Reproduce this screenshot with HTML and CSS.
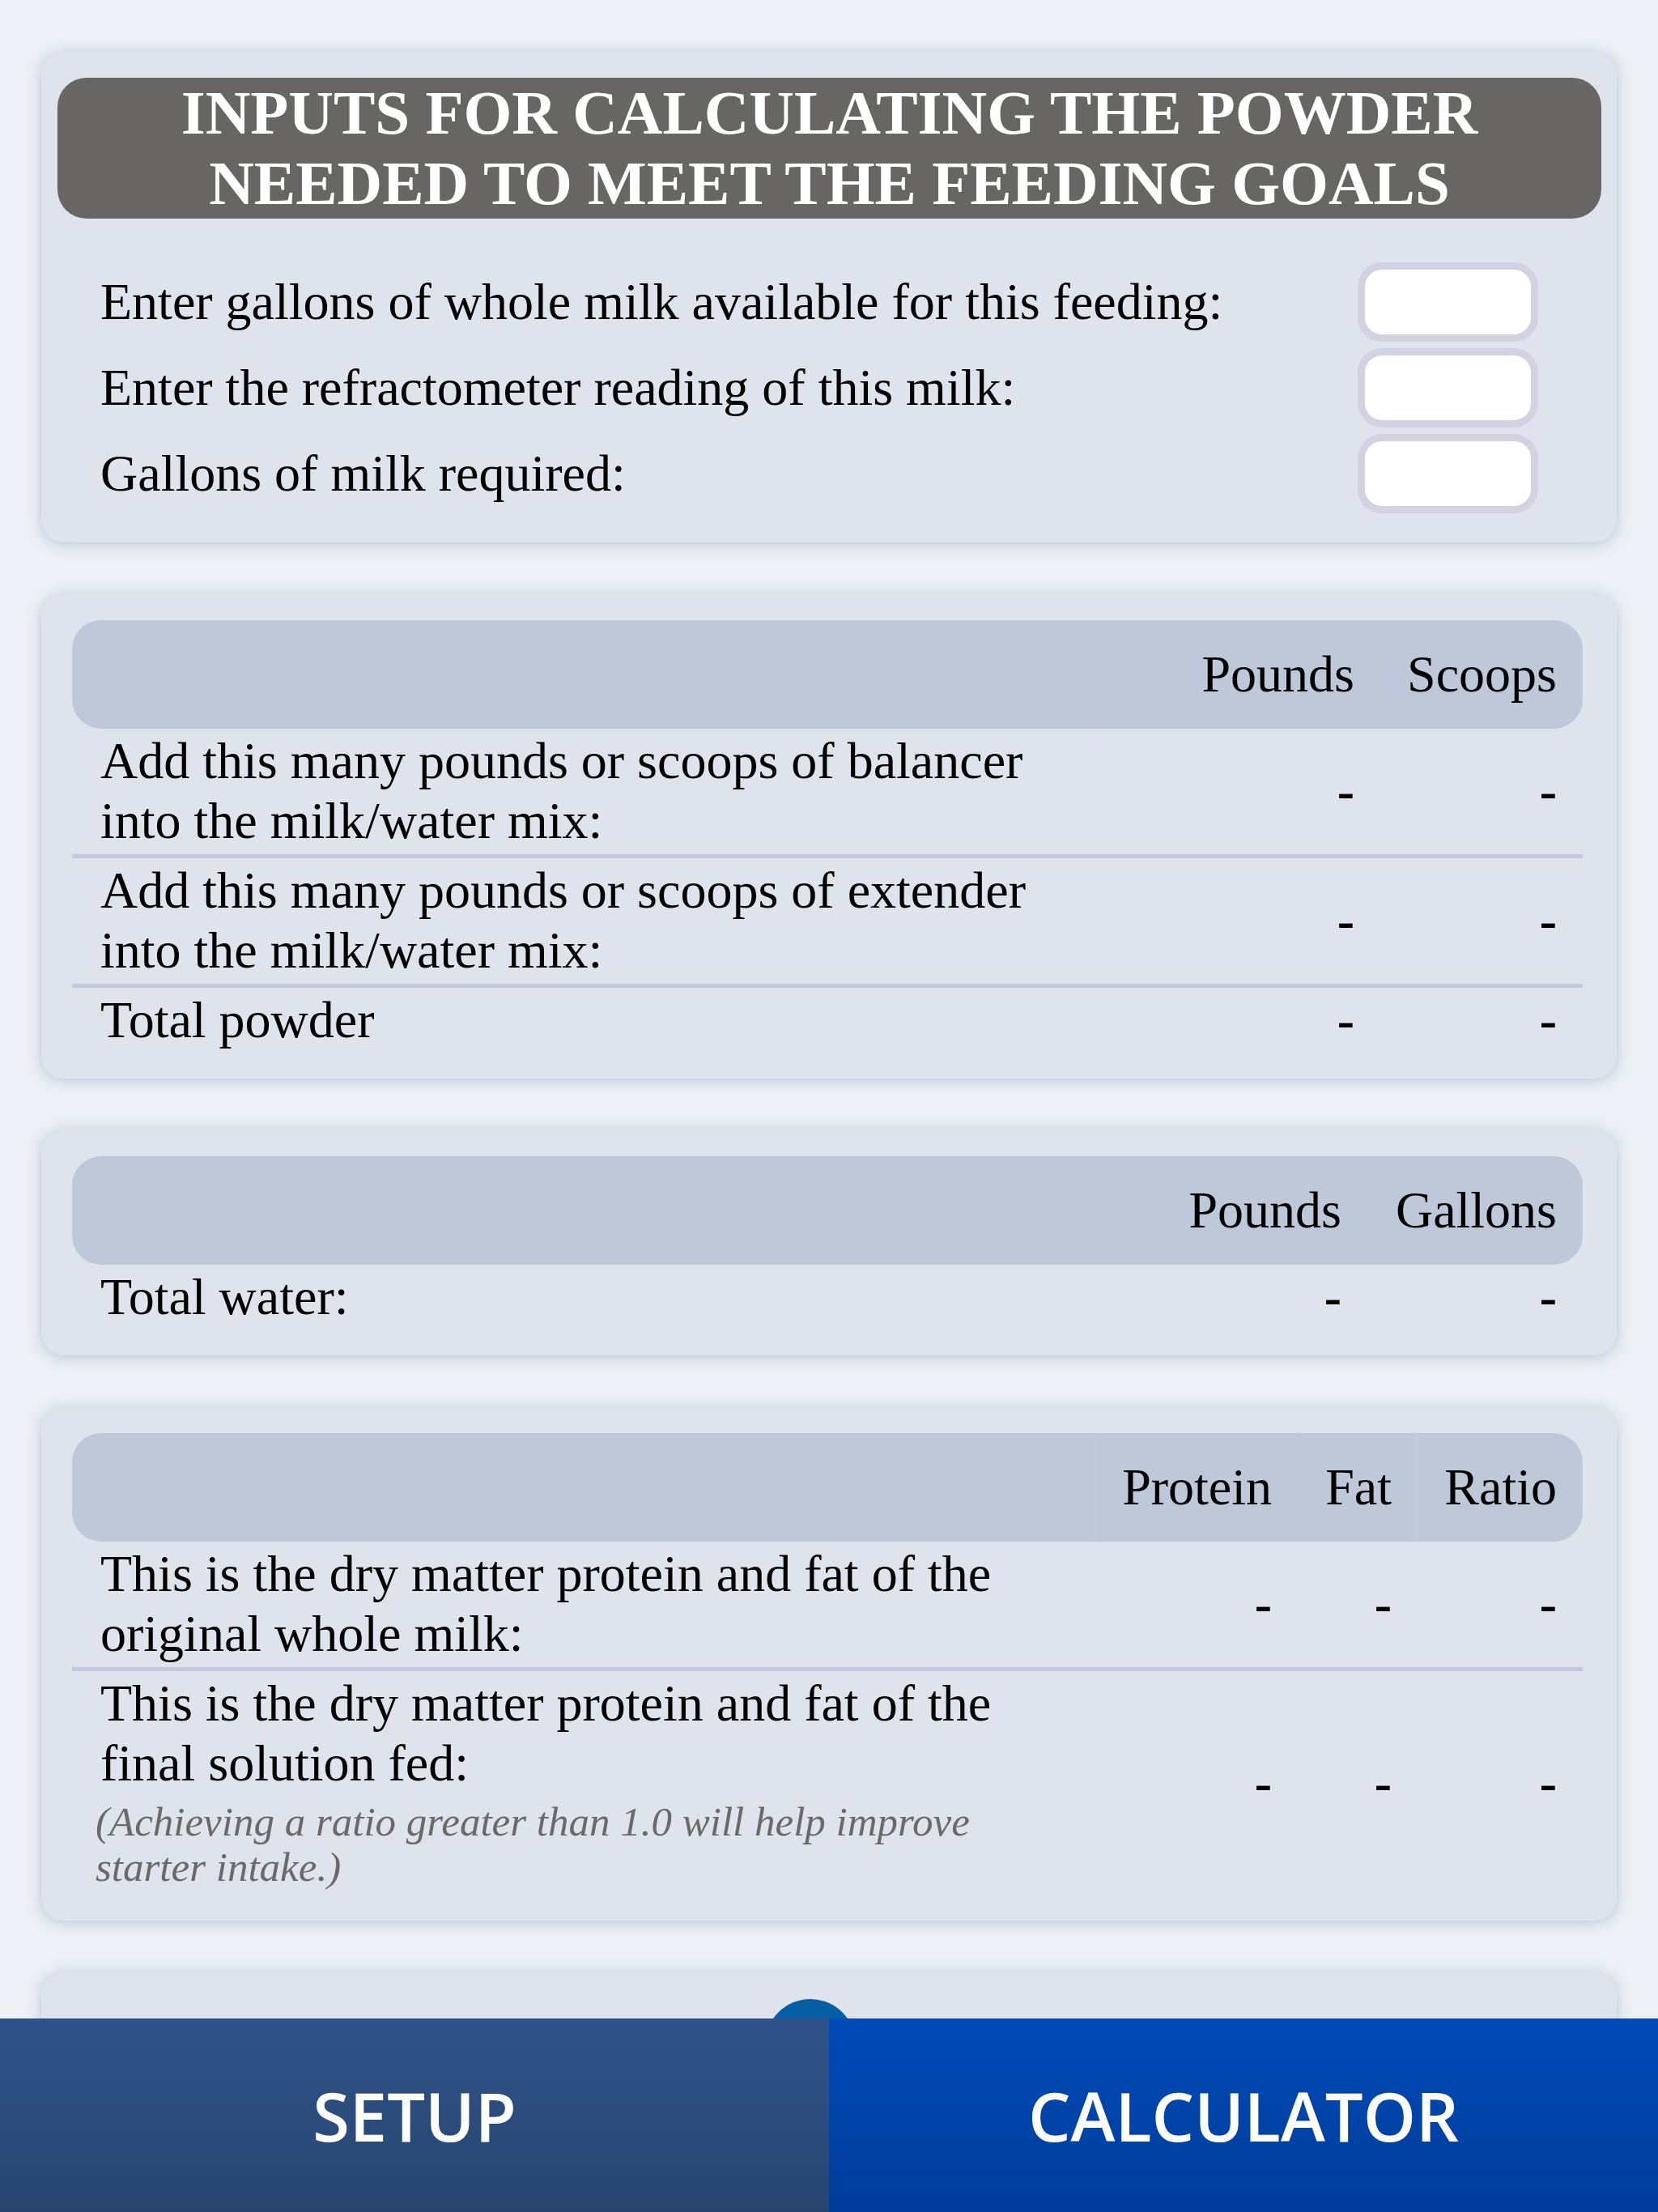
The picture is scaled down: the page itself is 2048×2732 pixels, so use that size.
FILE: index.html
```html
<!DOCTYPE html>
<html lang="en">

<head>
    <meta charset="UTF-8">
    <meta name="viewport" content="width=device-width, initial-scale=1.0">
    <title>Milk Replacer Calculator</title>
    <link rel="stylesheet" href="styles.css">
</head>

<body>
    <main class="content">
        <!-- Inputs -->
        <section class="card card-inputs">
            <h1 class="card-title">INPUTS FOR CALCULATING THE POWDER<br>NEEDED TO MEET THE FEEDING GOALS</h1>
            <div class="input-list">
                <label class="input-row">
                    <span>Enter gallons of whole milk available for this feeding:</span>
                    <input type="text" class="num-input">
                </label>
                <label class="input-row">
                    <span>Enter the refractometer reading of this milk:</span>
                    <input type="text" class="num-input">
                </label>
                <label class="input-row">
                    <span>Gallons of milk required:</span>
                    <input type="text" class="num-input">
                </label>
            </div>
        </section>

        <!-- Powder -->
        <section class="card card-table">
            <div class="table table-powder">
                <div class="tr head">
                    <div class="th th-label"></div>
                    <div class="th">Pounds</div>
                    <div class="th">Scoops</div>
                </div>
                <div class="tr">
                    <div class="td td-label"><span class="label-text">Add this many pounds or scoops of balancer into the milk/water mix:</span></div>
                    <div class="td num">-</div>
                    <div class="td num">-</div>
                </div>
                <div class="tr">
                    <div class="td td-label"><span class="label-text">Add this many pounds or scoops of extender into the milk/water mix:</span></div>
                    <div class="td num">-</div>
                    <div class="td num">-</div>
                </div>
                <div class="tr">
                    <div class="td td-label"><span class="label-text">Total powder</span></div>
                    <div class="td num">-</div>
                    <div class="td num">-</div>
                </div>
            </div>
        </section>

        <!-- Water -->
        <section class="card card-table">
            <div class="table table-water">
                <div class="tr head">
                    <div class="th th-label"></div>
                    <div class="th">Pounds</div>
                    <div class="th">Gallons</div>
                </div>
                <div class="tr">
                    <div class="td td-label"><span class="label-text">Total water:</span></div>
                    <div class="td num">-</div>
                    <div class="td num">-</div>
                </div>
            </div>
        </section>

        <!-- Protein / fat -->
        <section class="card card-table">
            <div class="table table-solids">
                <div class="tr head">
                    <div class="th th-label"></div>
                    <div class="th">Protein</div>
                    <div class="th">Fat</div>
                    <div class="th">Ratio</div>
                </div>
                <div class="tr">
                    <div class="td td-label"><span class="label-text">This is the dry matter protein and fat of the original whole milk:</span></div>
                    <div class="td num">-</div>
                    <div class="td num">-</div>
                    <div class="td num">-</div>
                </div>
                <div class="tr">
                    <div class="td td-label">
                        <span class="label-text">This is the dry matter protein and fat of the final solution fed:</span>
                        <p class="note">(Achieving a ratio greater than 1.0 will help improve starter intake.)</p>
                    </div>
                    <div class="td num">-</div>
                    <div class="td num">-</div>
                    <div class="td num">-</div>
                </div>
            </div>
        </section>

        <section class="card card-more">
            <div class="more-btn"></div>
        </section>
    </main>

    <nav class="tab-bar">
        <a class="tab tab-setup" href="#">SETUP</a>
        <a class="tab tab-calc" href="#">CALCULATOR</a>
    </nav>
</body>

</html>
```

FILE: styles.css
```css
body {
    margin: 0;
    padding: 0;
    background: #edf1f5;
    font-family: 'Liberation Serif', 'Times New Roman', serif;
    color: #000;
    height: 2732px;
    overflow: hidden;
}

.content {
    padding: 64px 51px 0;
}

.card {
    background: #dfe3eb;
    border-radius: 28px;
    box-shadow: 0 2px 18px rgba(122, 140, 175, 0.45);
    margin-bottom: 64px;
}

/* inputs card */
.card-inputs {
    padding: 32px 19px 32px 20px;
}

.card-title {
    margin: 0;
    background: #676665;
    color: #fff;
    border-radius: 36px;
    font-size: 77px;
    font-weight: bold;
    line-height: 87px;
    text-align: center;
}

.input-list {
    padding: 50px 78px 0 53px;
}

.input-row {
    display: flex;
    align-items: center;
    justify-content: space-between;
    height: 106px;
    font-size: 64px;
}

.num-input {
    box-sizing: border-box;
    width: 223px;
    height: 98px;
    border: 9px solid #d3d2e2;
    border-radius: 30px;
    background: #fff;
    outline: none;
}

/* tables */
.card-table {
    padding: 32px 42px 31px 38px;
}

.table-powder {
    --cols: 1267px 349px 250px;
}

.table-water {
    --cols: 1250px 350px 266px;
}

.table-solids {
    --cols: 1265px 249px 148px 204px;
}

.tr {
    display: grid;
    grid-template-columns: var(--cols);
    font-size: 64px;
    line-height: 74px;
    padding: 3px 0 4px;
    border-bottom: 5px solid #c3cadb;
}

.tr:last-child {
    border-bottom: none;
}

.tr.head {
    height: 134px;
    padding: 0;
    border-bottom: none;
    background: #bfc8d9;
    border-radius: 36px;
}

.th {
    display: flex;
    align-items: center;
    justify-content: flex-end;
    padding-right: 32px;
    border-left: 1px solid #c4ccdb;
}

.th-label {
    border-left: none;
}

.td-label {
    padding-left: 35px;
}

.label-text {
    display: block;
    max-width: 1180px;
}

.num {
    align-self: center;
    text-align: right;
    padding-right: 32px;
    font-weight: bold;
}

.note {
    margin: 7px 0 3px -6px;
    max-width: 1190px;
    font-size: 51px;
    line-height: 56px;
    font-style: italic;
    color: #6a6a6a;
}

/* last card, mostly hidden by the tab bar */
.card-more {
    height: 240px;
    padding-top: 33px;
    box-sizing: border-box;
    display: flex;
    justify-content: center;
}

.more-btn {
    width: 112px;
    height: 112px;
    border-radius: 50%;
    background: #075ea5;
    margin-right: 46px;
}

/* bottom tabs */
.tab-bar {
    position: fixed;
    left: 0;
    right: 0;
    bottom: 0;
    height: 239px;
    display: grid;
    grid-template-columns: 1fr 1fr;
}

.tab {
    display: flex;
    align-items: center;
    justify-content: center;
    color: #fff;
    text-decoration: none;
    font-family: 'Open Sans', 'Noto Sans', sans-serif;
    font-size: 83px;
    font-weight: 600;
}

.tab-setup {
    background: linear-gradient(#2f5389, #27456f);
}

.tab-calc {
    background: linear-gradient(#004bb9, #003c98);
}
```
